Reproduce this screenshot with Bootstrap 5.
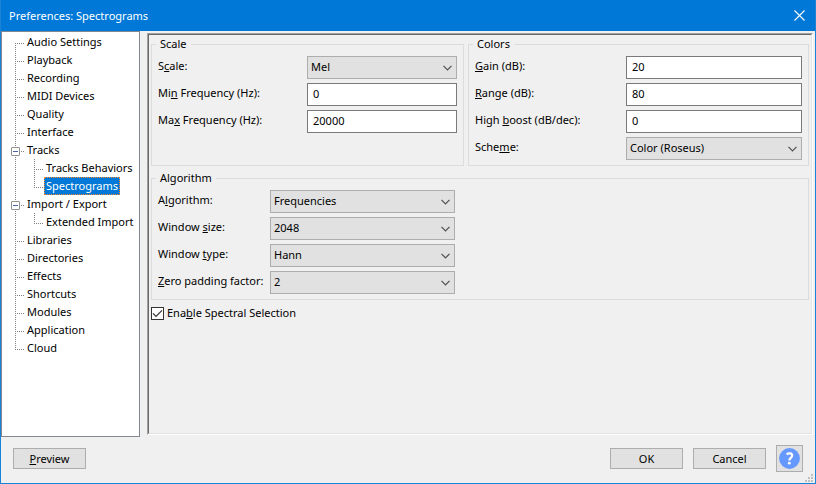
<!DOCTYPE html>
<html lang="en">
<head>
<meta charset="utf-8">
<meta name="viewport" content="width=device-width, initial-scale=1">
<title>Preferences: Spectrograms</title>
<link href="https://cdn.jsdelivr.net/npm/bootstrap@5.3.0/dist/css/bootstrap.min.css" rel="stylesheet">
<style>
  body { font: 11px/18px "Noto Sans", "Open Sans", sans-serif; color: #000; background: #f0f0f0; }
  .window { border: 1px solid #1883d7; border-top: 0; }
  .titlebar { background: #0078d7; height: 31px; padding: 0 10px 0 8px; }
  .titlebar h1 { font-size: 11px; }
  .titlebar button { width: 11px; height: 11px; }
  button svg { display: block; }

  .tree { width: 139px; border: 1px solid #828790; padding-top: 1px; }
  .tree li {
    --dots-v: repeating-linear-gradient(#808080 0 1px, transparent 1px 2px);
    --dots-h: repeating-linear-gradient(90deg, #808080 0 1px, transparent 1px 2px);
    background: var(--dots-v) 13px 0 / 1px 100% no-repeat, var(--dots-h) 13px 10px / 9px 1px no-repeat;
  }
  .tree > li:first-child { background-position: 13px 10px, 13px 10px; }
  .tree li:last-child { background-size: 1px 10px, 9px 1px; }
  .tree ul { margin-left: 19px; }
  .tree a { color: #000; margin-left: 23px; padding: 0 2px; white-space: nowrap; }
  .tree .branch { padding-left: 9px; }
  .tree .branch a { margin-left: 5px; }
  .tree .toggle { width: 9px; height: 9px; margin-top: 2px; border: 1px solid #919191; border-radius: 1px; background: linear-gradient(#4b63a7, #4b63a7) center / 5px 1px no-repeat, #fff; }
  .tree a.current { color: #fff; background: #0078d7; outline: 1px dotted #ff8728; outline-offset: -1px; }

  .pane { margin: 2px 2px 2px 7px; border: 1px solid; border-color: #a0a0a0 #fff #fff #a0a0a0; }
  .pane-inner { border: 1px solid; border-color: #696969 #e3e3e3 #e3e3e3 #696969; padding: 1px 2px 0; }
  fieldset.group { border: 1px solid #dcdcdc; padding: 4px 6px 5px; }
  .group legend { font-size: 11px; line-height: 16px; margin: 0 0 0 -2px; padding: 0 4px; }
  .g-scale { flex: 299 1 0; }
  .g-colors { flex: 327 1 0; }
  .fields { display: grid; row-gap: 4px; }
  .g-scale .fields { grid-template-columns: 149px 1fr; }
  .g-colors .fields { grid-template-columns: 151px 1fr; }
  .g-algorithm .fields { grid-template-columns: 112px 185px; }
  .fields label { line-height: 20px; white-space: nowrap; }
  .fields input, .fields select { font: inherit; height: 23px; min-height: 0; border-radius: 0; color: #000; }
  .fields input { border: 1px solid #7a7a7a; padding: 0 5px 2px; background: #fff; }
  .fields select { border: 1px solid #adadad; padding: 0 20px 1px 3px; background-color: #e1e1e1; background-position: right 4px center; background-size: 9px 6px;
    background-image: url("data:image/svg+xml,%3Csvg xmlns='http://www.w3.org/2000/svg' viewBox='0 0 9 6'%3E%3Cpath d='M.5 .8 4.5 4.8 8.5 .8' fill='none' stroke='%23505050' stroke-width='1.2'/%3E%3C/svg%3E"); }
  .tick { width: 13px; height: 13px; appearance: none; margin: 0; border: 1px solid #333;
    background: #fff url("data:image/svg+xml,%3Csvg xmlns='http://www.w3.org/2000/svg' viewBox='0 0 11 11'%3E%3Cpath d='M1 5.3 4 8.3 10 2.3' fill='none' stroke='%23333' stroke-width='1.2'/%3E%3C/svg%3E") center / 11px no-repeat; }
  .tick + label { padding-left: 3px; }

  .actions { padding: 8px 12px 11px; gap: 10px; }
  .push { font: inherit; color: #000; width: 73px; height: 21px; line-height: 17px; padding: 0 0 1px; border: 1px solid #adadad; border-radius: 0; background: #e1e1e1; }
  .push.help { width: 27px; height: 27px; padding: 2px; }
  .grip { right: 2px; bottom: 1px; }
</style>
</head>
<body>
<div class="window d-flex flex-column min-vh-100">
  <header class="titlebar d-flex align-items-center justify-content-between text-white">
    <h1 class="m-0 fw-normal">Preferences: Spectrograms</h1>
    <button type="button" class="border-0 bg-transparent p-0" aria-label="Close">
      <svg width="11" height="11" viewBox="0 0 11 11" fill="none" stroke="#fff" stroke-width="1.1"><path d="M.5 .5l10 10M10.500 .5l-10 10"/></svg>
    </button>
  </header>

  <div class="d-flex flex-grow-1">
    <ul class="tree list-unstyled bg-white m-0 flex-shrink-0">
      <li class="d-flex"><a href="#" class="text-decoration-none">Audio Settings</a></li>
      <li class="d-flex"><a href="#" class="text-decoration-none">Playback</a></li>
      <li class="d-flex"><a href="#" class="text-decoration-none">Recording</a></li>
      <li class="d-flex"><a href="#" class="text-decoration-none">MIDI Devices</a></li>
      <li class="d-flex"><a href="#" class="text-decoration-none">Quality</a></li>
      <li class="d-flex"><a href="#" class="text-decoration-none">Interface</a></li>
      <li>
        <div class="branch d-flex align-items-center"><button type="button" class="toggle p-0" aria-label="Collapse Tracks"></button><a href="#" class="text-decoration-none">Tracks</a></div>
        <ul class="list-unstyled">
          <li class="d-flex"><a href="#" class="text-decoration-none">Tracks Behaviors</a></li>
          <li class="d-flex"><a href="#" class="current text-decoration-none" aria-current="page">Spectrograms</a></li>
        </ul>
      </li>
      <li>
        <div class="branch d-flex align-items-center"><button type="button" class="toggle p-0" aria-label="Collapse Import / Export"></button><a href="#" class="text-decoration-none">Import / Export</a></div>
        <ul class="list-unstyled">
          <li class="d-flex"><a href="#" class="text-decoration-none">Extended Import</a></li>
        </ul>
      </li>
      <li class="d-flex"><a href="#" class="text-decoration-none">Libraries</a></li>
      <li class="d-flex"><a href="#" class="text-decoration-none">Directories</a></li>
      <li class="d-flex"><a href="#" class="text-decoration-none">Effects</a></li>
      <li class="d-flex"><a href="#" class="text-decoration-none">Shortcuts</a></li>
      <li class="d-flex"><a href="#" class="text-decoration-none">Modules</a></li>
      <li class="d-flex"><a href="#" class="text-decoration-none">Application</a></li>
      <li class="d-flex"><a href="#" class="text-decoration-none">Cloud</a></li>
    </ul>

    <main class="pane d-flex flex-grow-1">
      <form class="pane-inner flex-grow-1">
        <div class="d-flex gap-1 mb-1">
          <fieldset class="group g-scale">
            <legend class="float-none w-auto">Scale</legend>
            <div class="fields">
              <label for="scale">S<u>c</u>ale:</label>
              <select id="scale" class="form-select"><option>Mel</option></select>
              <label for="minf">Mi<u>n</u> Frequency (Hz):</label>
              <input id="minf" class="form-control" type="text" value="0">
              <label for="maxf">Ma<u>x</u> Frequency (Hz):</label>
              <input id="maxf" class="form-control" type="text" value="20000">
            </div>
          </fieldset>
          <fieldset class="group g-colors">
            <legend class="float-none w-auto">Colors</legend>
            <div class="fields">
              <label for="gain"><u>G</u>ain (dB):</label>
              <input id="gain" class="form-control" type="text" value="20">
              <label for="range"><u>R</u>ange (dB):</label>
              <input id="range" class="form-control" type="text" value="80">
              <label for="boost">High <u>b</u>oost (dB/dec):</label>
              <input id="boost" class="form-control" type="text" value="0">
              <label for="scheme">Sche<u>m</u>e:</label>
              <select id="scheme" class="form-select"><option>Color (Roseus)</option></select>
            </div>
          </fieldset>
        </div>
        <fieldset class="group g-algorithm">
          <legend class="float-none w-auto">Algorithm</legend>
          <div class="fields">
            <label for="algo">A<u>l</u>gorithm:</label>
            <select id="algo" class="form-select"><option>Frequencies</option></select>
            <label for="wsize">Window <u>s</u>ize:</label>
            <select id="wsize" class="form-select"><option>2048</option></select>
            <label for="wtype">Window <u>t</u>ype:</label>
            <select id="wtype" class="form-select"><option>Hann</option></select>
            <label for="zero"><u>Z</u>ero padding factor:</label>
            <select id="zero" class="form-select"><option>2</option></select>
          </div>
        </fieldset>
        <div class="d-flex align-items-center mt-1">
          <input id="spectral" class="tick" type="checkbox" checked>
          <label for="spectral">Ena<u>b</u>le Spectral Selection</label>
        </div>
      </form>
    </main>
  </div>

  <footer class="actions d-flex align-items-center position-relative">
    <button type="button" class="push me-auto"><u>P</u>review</button>
    <button type="button" class="push">OK</button>
    <button type="button" class="push">Cancel</button>
    <button type="button" class="push help" aria-label="Help">
      <svg width="21" height="21" viewBox="0 0 21 21"><circle cx="10.500" cy="10.500" r="10.400" fill="#6699ff"/><path d="M7.600 6.300C9.300 4.900 13.200 4.900 13.200 7.600c0 2.200-2.900 2.400-2.900 4.900" fill="none" stroke="#fff" stroke-width="2.200"/><circle cx="10.300" cy="15.200" r="1.400" fill="#fff"/></svg>
    </button>
    <svg class="grip position-absolute" width="8" height="8" viewBox="0 0 8 8" fill="#bfbfbf" aria-hidden="true"><path d="M6 0h2v2H6zM3 3h2v2H3zM6 3h2v2H6zM0 6h2v2H0zM3 6h2v2H3zM6 6h2v2H6z"/></svg>
  </footer>
</div>
<script src="https://cdn.jsdelivr.net/npm/bootstrap@5.3.0/dist/js/bootstrap.bundle.min.js"></script>
</body>
</html>
